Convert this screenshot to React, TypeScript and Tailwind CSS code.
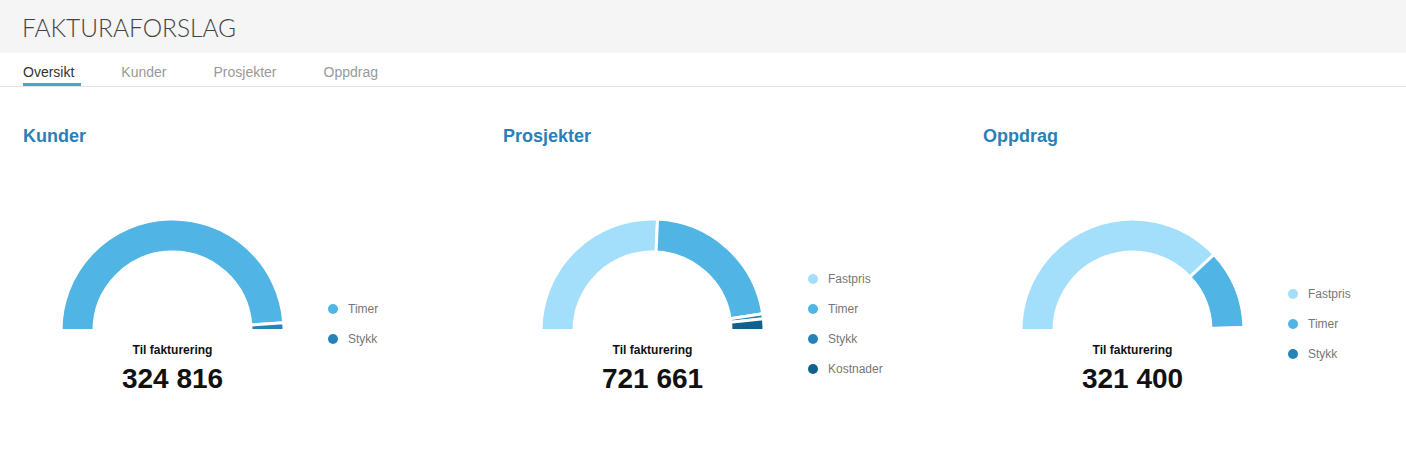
import React from "react";

const C = {
  fast: "#a3dffb",
  timer: "#50b4e4",
  stykk: "#2584b5",
  kost: "#10628c",
};

type Seg = { from: number; to: number; color: string };

function pt(cx: number, cy: number, r: number, deg: number) {
  const a = (deg * Math.PI) / 180;
  return [cx + r * Math.cos(a), cy - r * Math.sin(a)];
}

function arcPath(cx: number, cy: number, ro: number, ri: number, a0: number, a1: number) {
  const [x0, y0] = pt(cx, cy, ro, a0);
  const [x1, y1] = pt(cx, cy, ro, a1);
  const [x2, y2] = pt(cx, cy, ri, a1);
  const [x3, y3] = pt(cx, cy, ri, a0);
  const large = Math.abs(a0 - a1) > 180 ? 1 : 0;
  return `M${x0} ${y0} A${ro} ${ro} 0 ${large} 1 ${x1} ${y1} L${x2} ${y2} A${ri} ${ri} 0 ${large} 0 ${x3} ${y3} Z`;
}

function Gauge({ segs }: { segs: Seg[] }) {
  const cx = 111.5;
  const cy = 111.5;
  return (
    <svg width="223" height="112" viewBox="0 0 223 112" className="block">
      {segs.map((s, i) => (
        <path
          key={i}
          d={arcPath(cx, cy, 111.5, 78.5, s.from, s.to)}
          fill={s.color}
          stroke="#ffffff"
          strokeWidth={3}
          strokeLinejoin="miter"
        />
      ))}
    </svg>
  );
}

type Item = { label: string; color: string };

function Panel({
  title,
  segs,
  value,
  legend,
}: {
  title: string;
  segs: Seg[];
  value: string;
  legend: Item[];
}) {
  return (
    <div className="w-[480px] shrink-0 pl-[23px]">
      <h2 className="h-[22px] text-[18px] leading-[22px] font-bold text-[#2a80b6]">{title}</h2>
      <div className="mt-[72px] flex">
        <div className="ml-[38px] flex w-[223px] flex-col items-center">
          <Gauge segs={segs} />
          <div className="mt-[12px] text-[12px] leading-[14px] font-bold text-[#111]">Til fakturering</div>
          <div className="mt-[6px] text-[28px] leading-[32px] font-bold text-[#111]">{value}</div>
        </div>
        <div className="ml-[44px] mt-[40px] flex h-[130px] flex-col justify-center">
          {legend.map((l) => (
            <div key={l.label} className="flex h-[30px] items-center">
              <span className="h-[10px] w-[10px] rounded-full" style={{ backgroundColor: l.color }} />
              <span className="ml-[10px] text-[12px] text-[#777]">{l.label}</span>
            </div>
          ))}
        </div>
      </div>
    </div>
  );
}

export default function App() {
  const tabs = ["Oversikt", "Kunder", "Prosjekter", "Oppdrag"];
  return (
    <div
      className="min-h-[465px] w-[1406px] overflow-hidden bg-white"
      style={{ fontFamily: '"Liberation Sans", Arial, sans-serif' }}
    >
      <div className="flex h-[53px] items-center bg-[#f5f5f5] pl-[22px] pt-[3px]">
        <h1
          className="text-[24.5px] font-light text-[#444]"
          style={{ fontFamily: 'Lato, "Open Sans", sans-serif' }}
        >
          FAKTURAFORSLAG
        </h1>
      </div>
      <div className="flex h-[34px] gap-[40px] border-b border-[#e3e3e3] pl-[23px]">
        {tabs.map((t, i) => (
          <div
            key={t}
            className={
              i === 0
                ? "flex items-center border-b-[3px] border-[#4aa6c9] pr-[7px] pt-[8px] text-[14px] text-[#333]"
                : "flex items-center border-b-[3px] border-transparent pr-[7px] pt-[8px] text-[14px] text-[#999]"
            }
          >
            {t}
          </div>
        ))}
      </div>
      <div className="mt-[38px] flex">
        <Panel
          title="Kunder"
          value="324 816"
          segs={[
            { from: 180, to: 4, color: C.timer },
            { from: 4, to: 0, color: C.stykk },
          ]}
          legend={[
            { label: "Timer", color: C.timer },
            { label: "Stykk", color: C.stykk },
          ]}
        />
        <Panel
          title="Prosjekter"
          value="721 661"
          segs={[
            { from: 180, to: 87.4, color: C.fast },
            { from: 87.4, to: 8.6, color: C.timer },
            { from: 8.6, to: 6.0, color: C.stykk },
            { from: 6.0, to: 0, color: C.kost },
          ]}
          legend={[
            { label: "Fastpris", color: C.fast },
            { label: "Timer", color: C.timer },
            { label: "Stykk", color: C.stykk },
            { label: "Kostnader", color: C.kost },
          ]}
        />
        <Panel
          title="Oppdrag"
          value="321 400"
          segs={[
            { from: 180, to: 43, color: C.fast },
            { from: 43, to: 1.5, color: C.timer },
            { from: 1.5, to: 0, color: C.stykk },
          ]}
          legend={[
            { label: "Fastpris", color: C.fast },
            { label: "Timer", color: C.timer },
            { label: "Stykk", color: C.stykk },
          ]}
        />
      </div>
    </div>
  );
}
